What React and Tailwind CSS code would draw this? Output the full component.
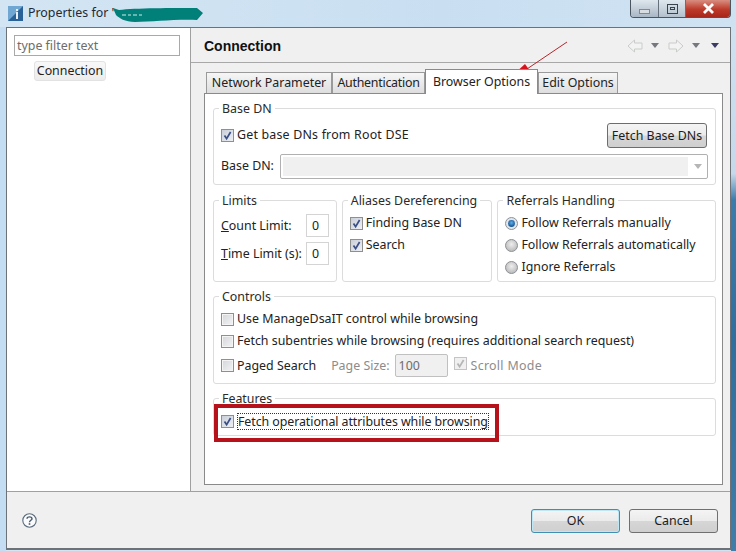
import React from "react";

const Check = ({ disabled }) => (
  <span className={`inline-flex items-center justify-center w-[13px] h-[13px] shrink-0 border ${disabled ? "border-[#c4c4c4] bg-[#f0f0f0]" : "border-[#8e8f8f] bg-[linear-gradient(135deg,#c9ced8,#eef0f4)]"}`}>
    <svg width="11" height="11" viewBox="0 0 11 11">
      <path d="M2.5 5.5 L4.6 8.6 L8.6 2" fill="none" stroke={disabled ? "#b5b5b5" : "#3a4f86"} strokeWidth="1.7" />
    </svg>
  </span>
);

const Box = () => (
  <span className="inline-block w-[13px] h-[13px] shrink-0 border border-[#8e8f8f] bg-[linear-gradient(135deg,#d4d6d9,#f2f3f4)] shadow-[inset_0_0_0_1px_#f4f4f4]" />
);

const Radio = ({ on }) => (
  <svg width="13" height="13" viewBox="0 0 13 13" className="shrink-0">
    <defs>
      <radialGradient id="rg" cx="0.5" cy="0.4" r="0.6">
        <stop offset="0" stopColor="#eeeeee" />
        <stop offset="1" stopColor="#b8b8b8" />
      </radialGradient>
      <radialGradient id="rb" cx="0.5" cy="0.4" r="0.6">
        <stop offset="0" stopColor="#5fb0e8" />
        <stop offset="1" stopColor="#0f4f8f" />
      </radialGradient>
    </defs>
    <circle cx="6.5" cy="6.5" r="6" fill={on ? "#dfe6ee" : "url(#rg)"} stroke="#8e9296" />
    {on && <circle cx="6.5" cy="6.5" r="3.4" fill="url(#rb)" />}
  </svg>
);

const Group = ({ title, className = "", children }) => (
  <fieldset className={`border border-[#dcdcdc] rounded-[3px] min-w-0 ${className}`}>
    <legend className="ml-[5px] px-[3px] h-4 pt-[1px] leading-4 text-[#2a2a2a]">{title}</legend>
    {children}
  </fieldset>
);

const Row = ({ children, className = "" }) => (
  <div className={`flex items-center gap-[3px] h-[22px] whitespace-nowrap ${className}`}>{children}</div>
);

const Tab = ({ w, active, children }) => (
  <div
    className={
      active
        ? "h-[25px] -mb-px z-10 bg-white border border-b-0 border-[#8a8a8a] flex items-start justify-center pt-[3px]"
        : "h-[21px] mt-[3px] pt-[1px] bg-[linear-gradient(#f6f6f6,#dedede)] border border-b-0 border-[#9a9a9a] flex items-center justify-center"
    }
    style={{ width: w }}
  >
    {children}
  </div>
);

const Tri = ({ color = "#77777f" }) => (
  <svg width="10" height="6" viewBox="0 0 10 6"><path d="M1 0 H9 L5 5 Z" fill={color} /></svg>
);

const NavArrow = ({ dir }) => (
  <svg width="16" height="14" viewBox="0 0 16 14" style={{ transform: dir === "r" ? "scaleX(-1)" : undefined }}>
    <path d="M1 7 L7.5 1 V4 H15 V10 H7.5 V13 Z" fill="#f3f3f3" stroke="#c8cdc8" />
  </svg>
);

const Btn = ({ className = "", children }) => (
  <button className={`rounded-[3px] pt-[1px] bg-[linear-gradient(#f4f4f4_0%,#ebebeb_48%,#d6d6d6_52%,#cfcfcf_100%)] text-[#1c1c1c] ${className}`}>{children}</button>
);

export default function App() {
  return (
    <div
      className="relative w-[736px] h-[551px] overflow-hidden flex flex-col text-[12.4px] text-[#222] bg-[linear-gradient(90deg,#d3e5f3,#c9dff1_60%,#cfe2f2)]"
      style={{ fontFamily: '"Noto Sans","Open Sans","Liberation Sans",sans-serif' }}
    >
      {/* title bar */}
      <div className="h-[27px] shrink-0 flex items-start pl-[8px]">
        <svg width="15" height="15" viewBox="0 0 15 15" className="mt-[6px] shrink-0">
          <rect width="15" height="15" fill="#6fa6d2" />
          <path d="M0 15 L15 0 V15 Z" fill="#2a6297" />
          <rect x="8" y="6" width="2" height="7" fill="#e8f0f8" />
          <rect x="8" y="3" width="2" height="2" fill="#e8f0f8" />
        </svg>
        <span className="ml-[5px] mt-[4px] leading-[18px] text-[#1e2a35]">Properties for '</span>
        <svg width="90" height="17" viewBox="0 0 90 17" className="mt-[6px] -ml-[1px] shrink-0">
          <path d="M0 2 L6 4 C22 2 60 2 84 2 L90 7 L84 14 C62 13 40 16 22 16 C12 16 6 12 3 9 Z" fill="#017f79" />
          <path d="M9 9 H13 M15 9 H18 M20 9 H24 M26 9 H29" stroke="#cfeeea" strokeWidth="1" />
        </svg>
        <div className="ml-auto mr-[5px] w-[101px] h-[18px] flex rounded-b-[4px] overflow-hidden border border-t-0 border-[#4a5560]">
          <div className="w-[28px] bg-[linear-gradient(#dfe7ee,#a9b6c4)] border-r border-[#66707c] flex items-end justify-center pb-[3px]">
            <span className="w-[11px] h-[5px] border border-[#7e8a98] bg-[#d8dde2]" />
          </div>
          <div className="w-[27px] bg-[linear-gradient(#dfe7ee,#b3c0cc)] border-r border-[#66707c] flex items-center justify-center">
            <span className="w-[11px] h-[10px] border border-[#39434e] flex items-center justify-center"><span className="w-[5px] h-[3px] border border-[#39434e]" /></span>
          </div>
          <div className="flex-1 bg-[linear-gradient(#d88e80,#bd3a2a_55%,#a8261a)] flex items-center justify-center">
            <svg width="15" height="11" viewBox="0 0 15 11">
              <path d="M3 1 L12 10 M12 1 L3 10" stroke="#ffffff" strokeWidth="2.8" />
            </svg>
          </div>
        </div>
      </div>

      <div className="flex-1 flex min-h-0">
        <div className="w-[6px] bg-[#c5ddf2]" />
        {/* client */}
        <div className="w-[725px] h-[523px] border border-[#6c7278] border-b-2 bg-[#f0f0f0] flex flex-col">
          <div className="flex h-[464px] border-b border-[#a0a0a0]">
            {/* left */}
            <div className="w-[184px] shrink-0 bg-white border-r border-[#a0a0a0] pt-[7px] pl-[7px]">
              <div className="w-[166px] h-[21px] border border-[#a9a9a9] px-[2px] leading-[19px] text-[#6d6d6d]">type filter text</div>
              <div className="mt-[5px] ml-[20px] w-[72px] h-[20px] rounded-[3px] border border-[#e2e2e2] bg-[linear-gradient(#f8f8f8,#ececec)] flex items-center justify-center text-[#222]">Connection</div>
            </div>
            {/* right */}
            <div className="flex-1 flex flex-col min-w-0">
              <div className="h-[35px] shrink-0 border-b border-[#a8a8a8] flex items-center pl-[13px] pr-[10px]">
                <span className="font-bold text-[14px] pt-[2px] text-[#111]" style={{ fontFamily: '"Liberation Sans",sans-serif' }}>Connection</span>
                <div className="ml-auto pt-[2px] flex items-center">
                  <NavArrow />
                  <span className="ml-[7px]"><Tri /></span>
                  <span className="ml-[8px]"><NavArrow dir="r" /></span>
                  <span className="ml-[7px]"><Tri /></span>
                  <span className="ml-[9px]"><Tri color="#3b3b63" /></span>
                </div>
              </div>
              <div className="pl-[13px] pr-[7px] flex-1 flex flex-col min-h-0">
                <div className="flex h-[30px] pl-[2px] items-end shrink-0">
                  <Tab w={126}>Network Parameter</Tab>
                  <Tab w={93}><span className="tracking-[-0.25px]">Authentication</span></Tab>
                  <Tab w={113} active>Browser Options</Tab>
                  <Tab w={80}>Edit Options</Tab>
                </div>
                <div className="h-[392px] bg-white border border-[#8a8a8a] pt-[6px] pl-[8px] pr-[6px] flex flex-col shrink-0">
                  <Group title="Base DN" className="h-[85px] shrink-0">
                    <div className="pl-[7px] pr-[8px] flex items-center justify-between h-[25px] mt-[7px]">
                      <div className="flex items-center gap-[3px]"><Check /><span className="tracking-[0.2px]">Get base DNs from Root DSE</span></div>
                      <Btn className="w-[100px] h-[25px] border border-[#6d6d6d]">Fetch Base DNs</Btn>
                    </div>
                    <div className="pl-[7px] pr-[7px] flex items-center h-[25px] mt-[6px]">
                      <span className="w-[59px] shrink-0">Base DN:</span>
                      <div className="flex-1 h-[25px] border border-[#b0b0b0] rounded-[2px] flex items-center p-[2px] pr-0">
                        <div className="flex-1 h-full bg-[#f0f0f0]" />
                        <div className="w-[19px] flex justify-center"><Tri color="#b5b5b5" /></div>
                      </div>
                    </div>
                  </Group>
                  <div className="flex gap-[5px] mt-[7px] h-[90px] shrink-0">
                    <Group title="Limits" className="w-[124px]">
                      <div className="pl-[7px] mt-[6px] flex items-center h-[23px]">
                        <span className="w-[85px] pt-[2px]"><span className="underline">C</span>ount Limit:</span>
                        <div className="w-[23px] h-[23px] border border-[#d4d4d4] pl-[5px] leading-[21px]">0</div>
                      </div>
                      <div className="pl-[7px] mt-[5px] flex items-center h-[23px]">
                        <span className="w-[85px] pt-[2px]"><span className="underline">T</span>ime Limit (s):</span>
                        <div className="w-[23px] h-[23px] border border-[#d4d4d4] pl-[5px] leading-[21px]">0</div>
                      </div>
                    </Group>
                    <Group title="Aliases Dereferencing" className="w-[151px]">
                      <div className="pl-[7px] mt-[4px]">
                        <Row><Check /><span>Finding Base DN</span></Row>
                        <Row><Check /><span>Search</span></Row>
                      </div>
                    </Group>
                    <Group title="Referrals Handling" className="w-[219px]">
                      <div className="pl-[7px] mt-[4px]">
                        <Row><Radio on /><span>Follow Referrals manually</span></Row>
                        <Row><Radio /><span>Follow Referrals automatically</span></Row>
                        <Row><Radio /><span>Ignore Referrals</span></Row>
                      </div>
                    </Group>
                  </div>
                  <Group title="Controls" className="mt-[6px] h-[96px] shrink-0">
                    <div className="pl-[7px] mt-[4px]">
                      <Row><Box /><span>Use ManageDsaIT control while browsing</span></Row>
                      <Row><Box /><span>Fetch subentries while browsing (requires additional search request)</span></Row>
                      <Row className="h-[23px] mt-[2px]">
                        <Box />
                        <span className="pt-[2px]">Paged Search</span>
                        <span className="ml-[12px] pt-[2px] text-[#8c8c8c]">Page Size:</span>
                        <div className="ml-[2px] w-[53px] h-[23px] border border-[#c0c0c0] rounded-[2px] bg-[#f0f0f0] pl-[3px] leading-[21px] text-[#6d6d6d]">100</div>
                        <span className="ml-[3px]"><Check disabled /></span>
                        <span className="ml-[1px] pt-[2px] tracking-[0.3px] text-[#8c8c8c]">Scroll Mode</span>
                      </Row>
                    </div>
                  </Group>
                  <Group title="Features" className="mt-[6px] h-[46px] shrink-0">
                    <div className="pl-[7px] mt-[4px]">
                      <Row className="gap-[2px]"><Check /><span className="border border-dotted border-[#333] leading-[15px] tracking-[-0.07px]">Fetch operational attributes while browsing</span></Row>
                    </div>
                  </Group>
                </div>
              </div>
            </div>
          </div>
          {/* bottom */}
          <div className="flex-1 flex items-center pt-[1px] pl-[15px] pr-[12px]">
            <svg width="15" height="15" viewBox="0 0 15 15">
              <circle cx="7.5" cy="7.5" r="6.7" fill="#fafbfc" stroke="#5a6b7d" strokeWidth="1.1" />
              <path d="M5 5.7 C5 3.2 10 3.2 10 5.7 C10 7.4 7.5 7.2 7.5 9.2" fill="none" stroke="#47596c" strokeWidth="1.4" />
              <rect x="6.7" y="10.2" width="1.6" height="1.6" fill="#47596c" />
            </svg>
            <Btn className="ml-auto w-[89px] h-[24px] border border-[#3f8fb5] shadow-[inset_0_0_0_1px_#bfe6f5]">OK</Btn>
            <Btn className="ml-[9px] w-[89px] h-[24px] border border-[#707070]">Cancel</Btn>
          </div>
        </div>
        <div className="w-[5px] bg-[linear-gradient(#cfe2f2_0%,#c5d9ea_28%,#3a7cab_33%,#2f6f9f_60%,#3e7ea9_100%)]" />
      </div>

      {/* annotations */}
      <div className="absolute left-[214px] top-[404px] w-[285px] h-[38px] border-[4px] border-[#b5121b] pointer-events-none" />
      <svg className="absolute left-[510px] top-[38px] pointer-events-none" width="62" height="40" viewBox="0 0 62 40">
        <path d="M57 4 L14 33" stroke="#b6252c" strokeWidth="1" />
        <path d="M4 36 L15 26 L20 33 Z" fill="#d8121c" />
      </svg>
    </div>
  );
}
